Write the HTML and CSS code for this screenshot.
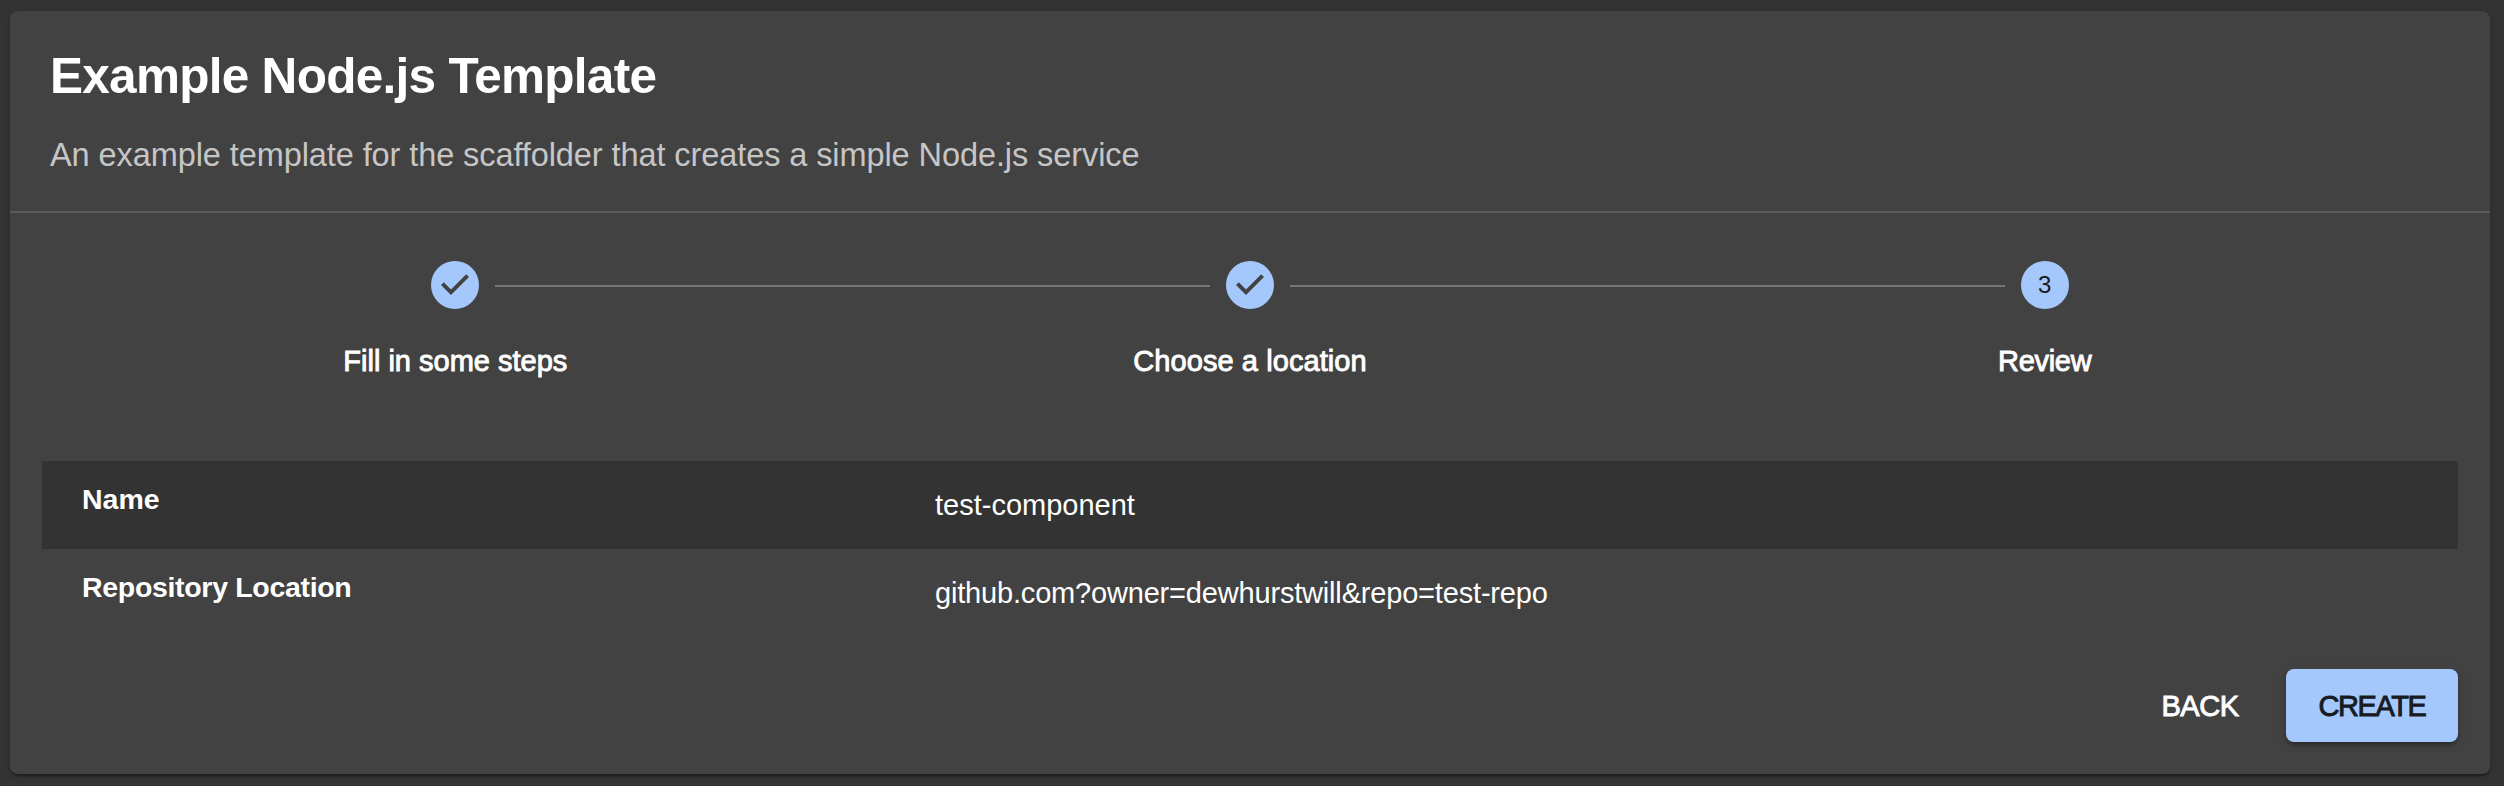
FILE: index.html
```html
<!DOCTYPE html>
<html lang="en">
<head>
<meta charset="utf-8">
<title>Example Node.js Template</title>
<link rel="stylesheet" href="styles.css">
</head>
<body>
<main class="card">
  <header class="card-header">
    <h1 class="title">Example Node.js Template</h1>
    <p class="subtitle">An example template for the scaffolder that creates a simple Node.js service</p>
  </header>
  <ol class="stepper">
    <li class="step">
      <div class="marker">
        <svg class="icon" viewBox="0 0 24 24"><path d="M12 0a12 12 0 1 0 0 24 12 12 0 0 0 0-24zm-2 17l-5-5 1.4-1.4 3.6 3.6 7.6-7.6L19 8l-9 9z"/></svg>
      </div>
      <span class="step-label">Fill in some steps</span>
    </li>
    <li class="step">
      <div class="marker">
        <svg class="icon" viewBox="0 0 24 24"><path d="M12 0a12 12 0 1 0 0 24 12 12 0 0 0 0-24zm-2 17l-5-5 1.4-1.4 3.6 3.6 7.6-7.6L19 8l-9 9z"/></svg>
      </div>
      <span class="step-label label-choose">Choose a location</span>
    </li>
    <li class="step">
      <div class="marker"><span class="number">3</span></div>
      <span class="step-label label-review">Review</span>
    </li>
  </ol>
  <section class="review">
    <dl class="row row-dark">
      <dt class="key">Name</dt>
      <dd class="value">test-component</dd>
    </dl>
    <dl class="row">
      <dt class="key key-long">Repository Location</dt>
      <dd class="value value-long">github.com?owner=dewhurstwill&amp;repo=test-repo</dd>
    </dl>
  </section>
  <footer class="actions">
    <button class="button">BACK</button>
    <button class="button button-primary">CREATE</button>
  </footer>
</main>
</body>
</html>
```
FILE: styles.css
```css
* { box-sizing: border-box; }
body {
  margin: 0;
  height: 786px;
  padding: 11px 14px 12px 10px;
  background: #333;
  color: #fff;
  font-family: "Liberation Sans", Arial, sans-serif;
  overflow: hidden;
}
.card {
  height: 763px;
  border-radius: 8px;
  background: #424242;
  box-shadow: 0 4px 2px -2px rgba(0,0,0,.2), 0 2px 2px rgba(0,0,0,.14), 0 2px 6px rgba(0,0,0,.12);
}
.card-header {
  height: 202px;
  padding: 36px 40px 0;
  border-bottom: 2px solid #5a5a5a;
}
.title {
  margin: 0;
  font-size: 49.5px;
  line-height: 58px;
  font-weight: 700;
  letter-spacing: -.72px;
  white-space: nowrap;
}
.subtitle {
  margin: 30px 0 0;
  font-size: 32.5px;
  line-height: 40px;
  letter-spacing: -.085px;
  color: #c6c6c6;
  white-space: nowrap;
}
.stepper {
  display: grid;
  grid-template-columns: repeat(3, 1fr);
  margin: 0;
  padding: 48px;
  list-style: none;
  height: 248px;
}
.step {
  display: flex;
  flex-direction: column;
  align-items: center;
}
.marker {
  display: grid;
  grid-template-columns: 1fr 48px 1fr;
  column-gap: 16px;
  width: 100%;
  height: 48px;
  align-items: center;
}
.marker::before, .marker::after {
  content: "";
  height: 2px;
  margin-top: 2px;
  background: #757575;
}
.marker > * { grid-column: 2; }
.marker::before { grid-column: 1; grid-row: 1; }
.marker::after { grid-column: 3; grid-row: 1; }
.step:first-child .marker::before, .step:last-child .marker::after { visibility: hidden; }
.icon { display: block; width: 48px; height: 48px; fill: #a4c8fc; }
.number {
  width: 48px;
  height: 48px;
  border-radius: 50%;
  background: #a4c8fc;
  color: #171b21;
  font-size: 24px;
  line-height: 48px;
  text-align: center;
}
.step-label {
  margin-top: 32px;
  font-size: 29px;
  line-height: 40px;
  -webkit-text-stroke: .9px currentColor;
}
.label-choose { letter-spacing: .08px; }
.label-review { letter-spacing: -.3px; }
.review { padding: 0 32px; }
.row {
  display: grid;
  grid-template-columns: 853px 1fr;
  height: 88px;
  margin: 0;
  padding: 0 40px;
}
.row-dark { background: #333; }
.key {
  padding-top: 18px;
  font-size: 28.5px;
  line-height: 40px;
  font-weight: 700;
}
.key-long { letter-spacing: -.32px; }
.value {
  margin: 0;
  padding-top: 24px;
  font-size: 29px;
  line-height: 40px;
}
.value-long { letter-spacing: -.18px; }
.actions {
  display: flex;
  justify-content: flex-end;
  gap: 16px;
  padding: 32px 32px 0;
}
.button {
  height: 73px;
  width: 140px;
  padding: 1px 0 0;
  border: 0;
  border-radius: 8px;
  background: transparent;
  color: #fff;
  font: 29px/72px "Liberation Sans", Arial, sans-serif;
  letter-spacing: -.5px;
  -webkit-text-stroke: .9px currentColor;
}
.button-primary {
  width: 172px;
  background: #a4c8fc;
  color: #171b21;
  letter-spacing: -1.4px;
  box-shadow: 0 6px 2px -4px rgba(0,0,0,.2), 0 4px 4px rgba(0,0,0,.14), 0 2px 10px rgba(0,0,0,.12);
}
```
